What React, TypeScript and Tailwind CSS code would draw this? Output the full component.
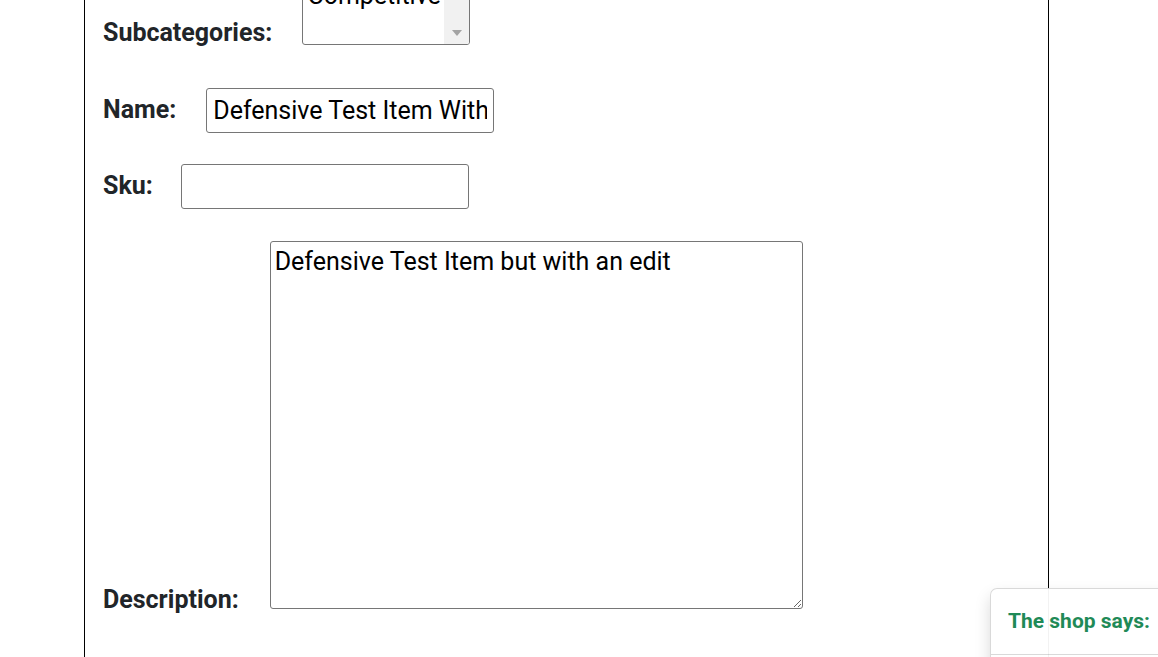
import React from "react";

export default function App() {
  return (
    <div className="relative h-[657px] w-full overflow-hidden bg-white font-['Roboto',sans-serif] text-[#212529]">
      <div className="ml-[84px] h-full w-[965px] border-x border-black pl-[18px]">
        {/* Subcategories */}
        <div className="flex h-[45px] items-end">
          <label className="mr-[30px] text-[25px] font-bold leading-[24px]">Subcategories:</label>
          <div className="relative flex h-[64px] w-[168px] shrink-0 overflow-hidden rounded-[3px] border border-[#767676] bg-white">
            <div className="flex-1 pl-[4px] text-[25px] leading-[28px] text-black">Competitive</div>
            <div className="flex w-[25px] flex-col items-center justify-end bg-[#f1f1f1] pb-[8px]">
              <svg width="10" height="6" viewBox="0 0 10 6">
                <polygon points="0,0 10,0 5,6" fill="#a3a3a3" />
              </svg>
            </div>
          </div>
        </div>

        {/* Name */}
        <div className="mt-[43px] flex items-center">
          <label className="mr-[30px] pb-[2px] text-[25px] font-bold leading-[28px]">Name:</label>
          <input
            readOnly
            value="Defensive Test Item With"
            className="h-[45px] w-[288px] rounded-[3px] border border-[#767676] bg-white px-[6px] text-[25px] text-black outline-none"
          />
        </div>

        {/* Sku */}
        <div className="mt-[31px] flex items-center">
          <label className="mr-[28px] pb-[2px] text-[25px] font-bold leading-[28px]">Sku:</label>
          <input
            readOnly
            value=""
            className="h-[45px] w-[288px] rounded-[3px] border border-[#767676] bg-white px-[6px] text-[25px] text-black outline-none"
          />
        </div>

        {/* Description */}
        <div className="mt-[32px] flex items-end">
          <label className="mr-[31px] text-[25px] font-bold leading-[18px]">Description:</label>
          <textarea
            readOnly
            defaultValue="Defensive Test Item but with an edit"
            className="block h-[368px] w-[533px] rounded-[3px] border border-[#767676] bg-white px-[4px] pt-[5px] text-[25px] leading-[29px] text-black outline-none"
          />
        </div>
      </div>

      {/* Toast */}
      <div className="absolute left-[990px] top-[588px] w-[400px] rounded-[7px] border border-[rgba(0,0,0,0.15)] bg-white/95 shadow-[0_0.5rem_1rem_rgba(0,0,0,0.15)]">
        <div className="flex h-[66px] items-center border-b border-[rgba(0,0,0,0.15)] px-[17px]">
          <span className="text-[21px] font-bold text-[#1f8a57]">The shop says:</span>
        </div>
        <div className="h-[60px]" />
      </div>
    </div>
  );
}
